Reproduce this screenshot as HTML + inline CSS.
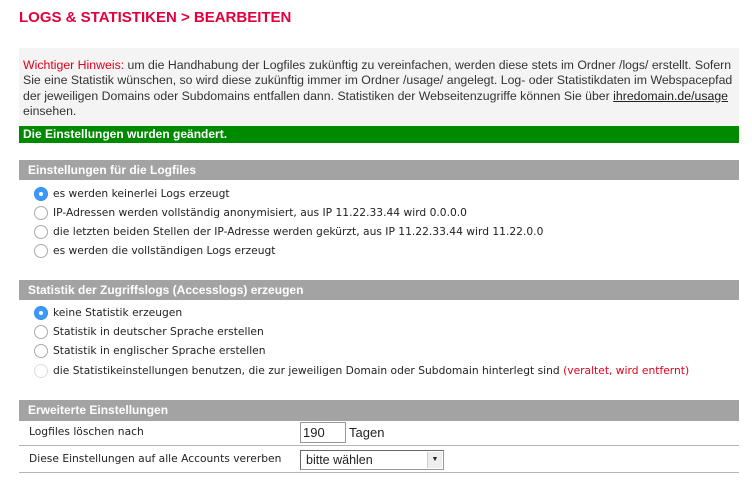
<!DOCTYPE html>
<html><head><meta charset="utf-8"><style>
body{margin:0;background:#fff;font-family:"Liberation Sans",Arial,sans-serif;}
.w{position:absolute;left:19px;width:720px;box-sizing:border-box;}
h1{position:absolute;left:19px;top:9px;margin:0;font-size:15px;font-weight:bold;color:#e2003d;}
.note{top:48px;height:78px;background:#f4f4f4;font-size:12.3px;line-height:15.3px;color:#333;padding:10px 0 0 4px;white-space:nowrap;overflow:hidden;}
.note .r{color:#e3001b}
.note u{color:#222}
.ok{top:126px;height:17px;background:#008a00;color:#fff;font-weight:bold;font-size:12px;line-height:16px;padding-left:4px;}
.hd{height:20px;background:#a3a3a3;color:#fff;font-weight:bold;font-size:12px;line-height:20px;padding-left:9px;}
.rd{position:absolute;left:34px;font-family:"DejaVu Sans",Verdana,sans-serif;font-size:10.7px;color:#222;line-height:14px;white-space:nowrap;}
.rd i{position:absolute;left:0;top:0;width:12px;height:12px;border:1px solid #aaa;border-radius:50%;background:#fff;}
.rd i.on{background:#3b99fc;border-color:#3b8ee8;}
.rd i.on:after{content:"";position:absolute;left:4px;top:4px;width:4px;height:4px;border-radius:50%;background:#fff;}
.rd i.dis{border-color:#ddd;}
.rd span{margin-left:19px;}
.row{font-family:"DejaVu Sans",Verdana,sans-serif;font-size:10.7px;color:#222;border-bottom:1px solid #b5b5b5;}
</style></head><body>
<h1>LOGS &amp; STATISTIKEN &gt; BEARBEITEN</h1>
<div class="w note"><span class="r">Wichtiger Hinweis:</span> um die Handhabung der Logfiles zukünftig zu vereinfachen, werden diese stets im Ordner /logs/ erstellt. Sofern<br>Sie eine Statistik wünschen, so wird diese zukünftig immer im Ordner /usage/ angelegt. Log- oder Statistikdaten im Webspacepfad<br>der jeweiligen Domains oder Subdomains entfallen dann. Statistiken der Webseitenzugriffe können Sie über <u>ihredomain.de/usage</u><br>einsehen.</div>
<div class="w ok">Die Einstellungen wurden geändert.</div>
<div class="w hd" style="top:160px">Einstellungen für die Logfiles</div>
<div class="rd" style="top:187px"><i class="on"></i><span>es werden keinerlei Logs erzeugt</span></div>
<div class="rd" style="top:206px"><i></i><span>IP-Adressen werden vollständig anonymisiert, aus IP 11.22.33.44 wird 0.0.0.0</span></div>
<div class="rd" style="top:225px"><i></i><span>die letzten beiden Stellen der IP-Adresse werden gekürzt, aus IP 11.22.33.44 wird 11.22.0.0</span></div>
<div class="rd" style="top:244px"><i></i><span>es werden die vollständigen Logs erzeugt</span></div>
<div class="w hd" style="top:280px">Statistik der Zugriffslogs (Accesslogs) erzeugen</div>
<div class="rd" style="top:306px"><i class="on"></i><span>keine Statistik erzeugen</span></div>
<div class="rd" style="top:325px"><i></i><span>Statistik in deutscher Sprache erstellen</span></div>
<div class="rd" style="top:344px"><i></i><span>Statistik in englischer Sprache erstellen</span></div>
<div class="rd" style="top:364px"><i class="dis"></i><span>die Statistikeinstellungen benutzen, die zur jeweiligen Domain oder Subdomain hinterlegt sind <span style="margin:0;color:#e3001b">(veraltet, wird entfernt)</span></span></div>
<div class="w hd" style="top:400px;height:21px">Erweiterte Einstellungen</div>
<div class="w row" style="top:421px;height:25px"><span style="position:absolute;left:10px;top:4px">Logfiles löschen nach</span>
<div style="position:absolute;left:281px;top:1px;border:1px solid #999;font-family:'Liberation Sans',Arial;font-size:13px;line-height:19px;padding-left:2px;box-sizing:border-box;width:46px;height:21px">190</div>
<span style="position:absolute;left:330px;top:4px;font-family:'Liberation Sans',Arial;font-size:13px">Tagen</span></div>
<div class="w row" style="top:446px;height:27px"><span style="position:absolute;left:10px;top:6px">Diese Einstellungen auf alle Accounts vererben</span>
<div style="position:absolute;left:281px;top:4px;width:144px;height:20px;border:1px solid #999;border-left-color:#666;border-top-color:#666;box-sizing:border-box;font-family:'Liberation Sans',Arial;font-size:12.5px;line-height:18px;padding-left:5px;background:#fff">bitte wählen
<div style="position:absolute;right:1px;top:1px;width:14px;height:16px;background:#eee;border-left:1px solid #ccc;font-size:7px;line-height:16px;text-align:center">▼</div></div></div>
</body></html>
